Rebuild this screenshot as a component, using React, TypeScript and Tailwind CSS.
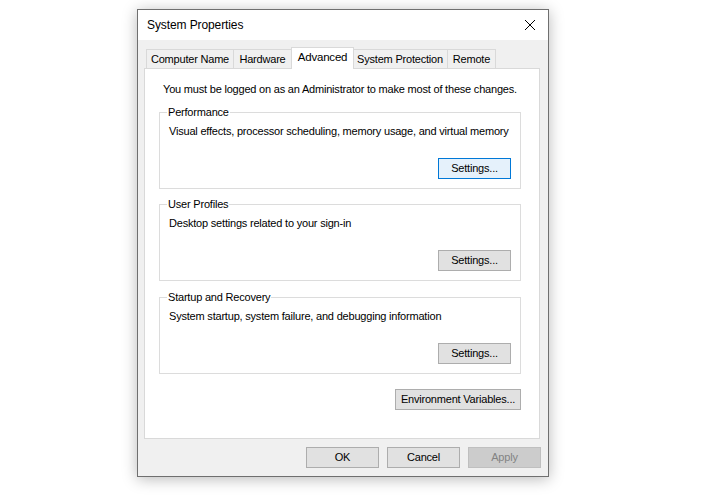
import React from "react";

const font = { fontFamily: '"Liberation Sans", Arial, sans-serif' };
const txt = "text-[11px] tracking-[-0.2px]";

function Btn({ children, w, focus, disabled }: { children: React.ReactNode; w: string; focus?: boolean; disabled?: boolean }) {
  const base = `h-[21px] flex items-center justify-center ${txt} leading-none border whitespace-nowrap`;
  let cls = "bg-[#e1e1e1] border-[#adadad] text-black";
  if (focus) cls = "bg-[#e5f1fb] border-[#0078d7] text-black";
  if (disabled) cls = "bg-[#cccccc] border-[#bfbfbf] text-[#838383]";
  return <div className={`${base} ${cls} ${w}`}>{children}</div>;
}

function Group({ title, desc, focus, cls }: { title: string; desc: string; focus?: boolean; cls: string }) {
  return (
    <fieldset className={`border border-[#dcdcdc] px-[9px] pb-[9px] min-w-0 ${cls}`}>
      <legend className={`px-[1px] ml-[-2px] ${txt} leading-[16px] whitespace-nowrap`}>{title}</legend>
      <div className={`${txt} leading-[16px] mt-[3px] whitespace-nowrap`}>{desc}</div>
      <div className="flex justify-end mt-[19px]">
        <Btn w="w-[73px]" focus={focus}>Settings...</Btn>
      </div>
    </fieldset>
  );
}

const tabs = [
  { label: "Computer Name", w: "w-[88px]" },
  { label: "Hardware", w: "w-[58px]" },
  { label: "Advanced", w: "w-[63px]", sel: true },
  { label: "System Protection", w: "w-[95px]" },
  { label: "Remote", w: "w-[48px]" },
];

export default function App() {
  return (
    <div className="w-[706px] h-[500px] bg-white pl-[137px] pt-[9px]" style={font}>
      <div className="w-[412px] h-[468px] border border-[#6f6f6f] shadow-[0_2px_14px_rgba(0,0,0,0.28)] flex flex-col bg-[#f0f0f0]">
        <div className="h-[30px] bg-white flex items-center justify-between pl-[9px] pr-[9px]">
          <span className="text-[12px] tracking-[-0.1px] text-black">System Properties</span>
          <svg width="12" height="12" viewBox="0 0 12 12" className="mr-[3px]">
            <path d="M1 1 L11 11 M11 1 L1 11" stroke="#000" strokeWidth="1" />
          </svg>
        </div>
        <div className="flex-1 flex flex-col px-[6px]">
          <div className="flex items-end h-[28px] pl-[2px]">
            {tabs.map((t, i) =>
              t.sel ? (
                <div
                  key={i}
                  className={`${t.w} h-[22px] bg-white border border-b-0 border-[#d9d9d9] text-[11.5px] tracking-[-0.2px] flex items-center justify-center pb-[2px] mb-[-1px] relative z-10 -mx-[1px] whitespace-nowrap`}
                >
                  {t.label}
                </div>
              ) : (
                <div
                  key={i}
                  className={`${t.w} h-[19px] bg-[#f0f0f0] border border-[#d9d9d9] border-b-0 ${txt} flex items-center justify-center whitespace-nowrap ${i > 0 ? "border-l-0" : ""}`}
                >
                  {t.label}
                </div>
              )
            )}
          </div>
          <div className="w-[396px] h-[371px] bg-white border border-[#d9d9d9] flex flex-col pt-[12px] pl-[14px] pr-[18px]">
            <div className={`${txt} leading-[16px] pl-[4px] whitespace-nowrap`}>
              You must be logged on as an Administrator to make most of these changes.
            </div>
            <div className="flex flex-col mt-[7px]">
              <Group cls="" title="Performance" desc="Visual effects, processor scheduling, memory usage, and virtual memory" focus />
              <Group cls="mt-[7px]" title="User Profiles" desc="Desktop settings related to your sign-in" />
              <Group cls="mt-[8px]" title="Startup and Recovery" desc="System startup, system failure, and debugging information" />
            </div>
            <div className="flex justify-end mt-[15px]">
              <Btn w="w-[126px]">Environment Variables...</Btn>
            </div>
          </div>
          <div className="flex justify-end gap-[8px] mt-[8px] pr-[1px]">
            <Btn w="w-[73px]">OK</Btn>
            <Btn w="w-[73px]">Cancel</Btn>
            <Btn w="w-[73px]" disabled>Apply</Btn>
          </div>
        </div>
      </div>
    </div>
  );
}
